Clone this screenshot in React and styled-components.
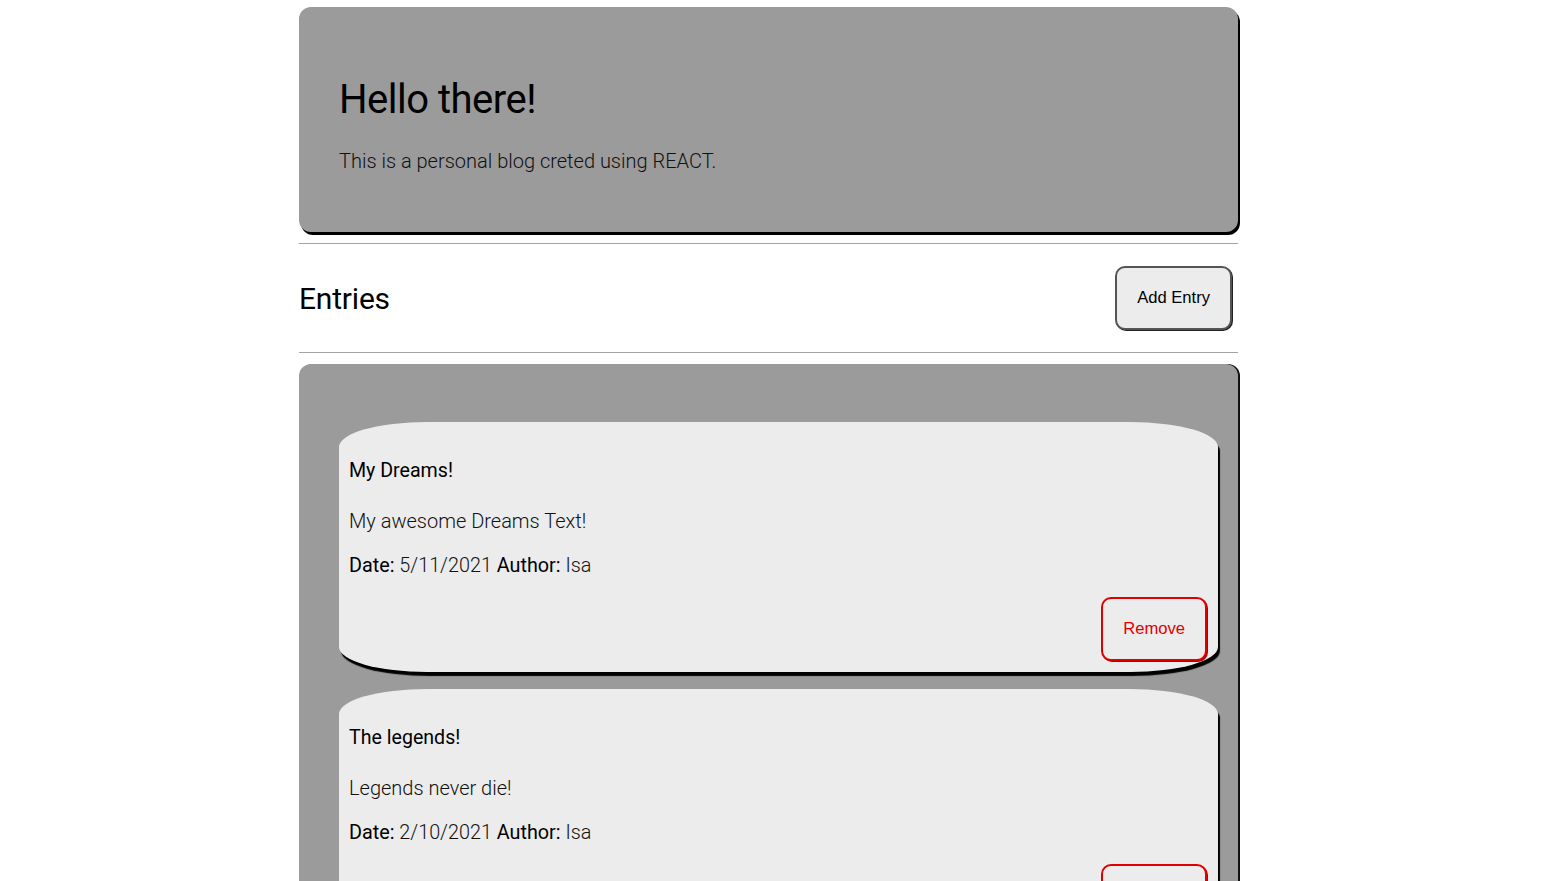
import React from "react";
import styled, { createGlobalStyle } from "styled-components";

const Global = createGlobalStyle`
  html, body { margin: 0; padding: 0; background: #fff; }
  body { font-family: Roboto, "Noto Sans", sans-serif; color: #000; padding-right: 6px; }
`;

const Page = styled.div`
  width: 939px;
  margin: 0 auto;
  padding-top: 7px;
`;

const Jumbo = styled.header`
  background: #9b9b9b;
  border-radius: 12px;
  box-shadow: 2px 3px 0 #000;
  height: 225px;
  box-sizing: border-box;
  padding: 69px 40px 0;
`;

const Title = styled.h1`
  margin: 0;
  font-size: 40px;
  font-weight: 400;
  line-height: 1.2;
  letter-spacing: -0.5px;
  color: #000;
`;

const Lead = styled.p`
  margin: 25px 0 0;
  font-size: 20px;
  font-weight: 300;
  line-height: 1.2;
  color: #111;
`;

const Rule = styled.hr`
  margin: ${(p) => p.$top || 0}px 0 0;
  border: 0;
  border-top: 1px solid #a3a3a3;
  height: 0;
`;

const EntriesBar = styled.div`
  display: flex;
  align-items: center;
  justify-content: space-between;
  height: 108px;
  padding-right: 6px;
`;

const SectionTitle = styled.h2`
  margin: 0;
  font-size: 30px;
  font-weight: 400;
  letter-spacing: -0.2px;
  color: #000;
`;

const Button = styled.button`
  font-family: "Liberation Sans", Arial, sans-serif;
  font-size: 16.6px;
  height: 64px;
  padding: 0 20px;
  border-radius: 10px;
  background: #ececec;
  cursor: pointer;
  color: ${(p) => (p.$danger ? "#e00000" : "#000")};
  border: 2px solid ${(p) => (p.$danger ? "#e00000" : "#555")};
  box-shadow: ${(p) => (p.$danger ? "1px 1px 0 #b00000" : "1px 1px 0 #222")};
`;

const EntriesBox = styled.section`
  margin-top: 11px;
  background: #9b9b9b;
  border-radius: 12px;
  box-shadow: 2px 0 0 #111;
  padding: 58px 20px 20px 40px;
  display: flex;
  flex-direction: column;
  gap: 17px;
`;

const Card = styled.article`
  background: #ececec;
  border-radius: 10%;
  box-shadow: 2px 4px 1px #000;
  height: 250px;
  box-sizing: border-box;
  padding: 37px 11px 11px 10px;
  display: flex;
  flex-direction: column;
`;

const CardTitle = styled.h3`
  margin: 0;
  font-size: 19.6px;
  font-weight: 400;
  line-height: 24px;
  color: #000;
`;

const CardText = styled.p`
  margin: 26px 0 0;
  font-size: 20px;
  font-weight: 300;
  line-height: 24px;
  color: #111;
`;

const Meta = styled.p`
  margin: 21px 0 0;
  font-size: 19.8px;
  font-weight: 300;
  line-height: 24px;
  color: #111;
  b { font-weight: 400; color: #000; }
`;

const Actions = styled.div`
  margin-top: auto;
  display: flex;
  justify-content: flex-end;
`;

const entries = [
  { title: "My Dreams!", text: "My awesome Dreams Text!", date: "5/11/2021", author: "Isa" },
  { title: "The legends!", text: "Legends never die!", date: "2/10/2021", author: "Isa" },
];

export default function App() {
  return (
    <>
      <Global />
      <Page>
        <Jumbo>
          <Title>Hello there!</Title>
          <Lead>This is a personal blog creted using REACT.</Lead>
        </Jumbo>
        <Rule $top={11} />
        <EntriesBar>
          <SectionTitle>Entries</SectionTitle>
          <Button>Add Entry</Button>
        </EntriesBar>
        <Rule />
        <EntriesBox>
          {entries.map((e) => (
            <Card key={e.title}>
              <CardTitle>{e.title}</CardTitle>
              <CardText>{e.text}</CardText>
              <Meta>
                <b>Date:</b> {e.date} <b>Author:</b> {e.author}
              </Meta>
              <Actions>
                <Button $danger>Remove</Button>
              </Actions>
            </Card>
          ))}
        </EntriesBox>
      </Page>
    </>
  );
}
